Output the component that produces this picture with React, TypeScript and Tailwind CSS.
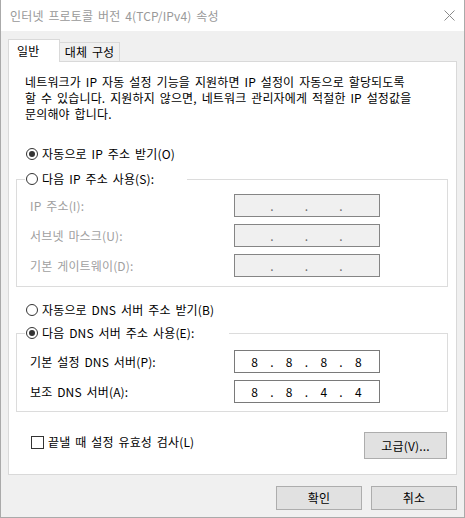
import React from 'react'

const font = {
	fontFamily: '"Noto Sans CJK KR", "Noto Sans", sans-serif',
}

function Radio({ checked }: { checked?: boolean }) {
	return (
		<span className="ml-[1px] mr-[4px] w-[12px] h-[12px] rounded-full border border-[#333333] bg-white flex items-center justify-center shrink-0">
			{checked && <span className="w-[6px] h-[6px] rounded-full bg-[#333333]" />}
		</span>
	)
}

function IpBox({ parts, disabled }: { parts?: string[]; disabled?: boolean }) {
	const cells = parts ?? ['', '', '', '']
	return (
		<div
			className={
				disabled
					? 'w-[146px] h-[23px] border border-[#858585] bg-[#f0f0f0] flex items-center'
					: 'w-[146px] h-[23px] border border-[#7a7a7a] bg-white flex items-center'
			}
		>
			<div className="ml-[11px] w-[121px] grid grid-cols-7 text-center text-[12px] leading-[16px] text-black [word-spacing:0px]">
				<span>{cells[0]}</span>
				<span className={disabled ? 'text-[#6d6d6d]' : ''}>.</span>
				<span>{cells[1]}</span>
				<span className={disabled ? 'text-[#6d6d6d]' : ''}>.</span>
				<span>{cells[2]}</span>
				<span className={disabled ? 'text-[#6d6d6d]' : ''}>.</span>
				<span>{cells[3]}</span>
			</div>
		</div>
	)
}

function FieldRow({
	label,
	disabled,
	parts,
	className,
}: {
	label: string
	disabled?: boolean
	parts?: string[]
	className?: string
}) {
	return (
		<div className={'flex items-center pl-[13px] ' + (className ?? '')}>
			<div className={'w-[204px] ' + (disabled ? 'text-[#a0a0a0]' : 'text-black')}>
				{label}
			</div>
			<IpBox disabled={disabled} parts={parts} />
		</div>
	)
}

export default function App() {
	return (
		<div
			style={font}
			className="w-[465px] h-[518px] flex flex-col border-x border-b border-[#aaaaaa] bg-[#f0f0f0] text-[12px] leading-[16px] text-black [word-spacing:2px] tracking-[0.15px]"
		>
			{/* title bar */}
			<div className="h-[31px] bg-white flex items-center justify-between pl-[9px] pr-[9px] shrink-0">
				<span className="text-[12px] text-[#999999]">
					인터넷 프로토콜 버전 4(TCP/IPv4) 속성
				</span>
				<svg width="11" height="11" viewBox="0 0 11 11">
					<path d="M0.5 0.5 L10.5 10.5 M10.5 0.5 L0.5 10.5" stroke="#8a8a8a" strokeWidth="1" />
				</svg>
			</div>

			<div className="flex-1 px-[7px] pt-[8px] flex flex-col">
				{/* tabs */}
				<div className="flex items-end h-[22px]">
					<div className="relative z-10 w-[52px] h-[23px] -mb-[1px] bg-white border-x border-t border-[#d9d9d9] pl-[8px] flex items-center">
						일반
					</div>
					<div className="w-[60px] h-[19px] border-t border-r border-[#d9d9d9] flex items-center justify-center">
						대체 구성
					</div>
				</div>

				{/* panel */}
				<div className="h-[414px] bg-white border border-[#d9d9d9] flex flex-col">
					<p className="pl-[16px] pt-[12px] whitespace-nowrap">
						네트워크가 IP 자동 설정 기능을 지원하면 IP 설정이 자동으로 할당되도록
						<br />
						할 수 있습니다. 지원하지 않으면, 네트워크 관리자에게 적절한 IP 설정값을
						<br />
						문의해야 합니다.
					</p>

					<div className="mt-[23px] ml-[16px] h-[18px] flex items-center">
						<Radio checked />
						자동으로 IP 주소 받기(O)
					</div>

					<fieldset className="mt-[7px] ml-[7px] mr-[8px] border border-[#dcdcdc] pb-[9px]">
						<legend className="ml-[8px] w-[162px] h-[18px] flex items-center bg-white">
							<Radio />
							다음 IP 주소 사용(S):
						</legend>
						<FieldRow className="mt-[6px]" label="IP 주소(I):" disabled />
						<FieldRow className="mt-[7px]" label="서브넷 마스크(U):" disabled />
						<FieldRow className="mt-[7px]" label="기본 게이트웨이(D):" disabled />
					</fieldset>

					<div className="mt-[14px] ml-[16px] h-[18px] flex items-center">
						<Radio />
						자동으로 DNS 서버 주소 받기(B)
					</div>

					<fieldset className="mt-[5px] ml-[7px] mr-[8px] border border-[#dcdcdc] pb-[8px]">
						<legend className="ml-[8px] w-[204px] h-[18px] flex items-center bg-white">
							<Radio checked />
							다음 DNS 서버 주소 사용(E):
						</legend>
						<FieldRow className="mt-[8px]" label="기본 설정 DNS 서버(P):" parts={['8', '8', '8', '8']} />
						<FieldRow className="mt-[7px]" label="보조 DNS 서버(A):" parts={['8', '8', '4', '4']} />
					</fieldset>

					<div className="mt-[20px] pl-[22px] pr-[9px] flex justify-between items-start">
						<label className="mt-[1px] h-[18px] flex items-center">
							<span className="w-[13px] h-[13px] border border-[#333333] bg-white mr-[4px]" />
							끝낼 때 설정 유효성 검사(L)
						</label>
						<button className="w-[83px] h-[27px] bg-[#e1e1e1] border border-[#adadad] text-black">
							고급(V)...
						</button>
					</div>
				</div>

				{/* dialog buttons */}
				<div className="mt-[11px] flex justify-end gap-[9px]">
					<button className="w-[86px] h-[24px] bg-[#e1e1e1] border border-[#adadad] text-black">
						확인
					</button>
					<button className="w-[86px] h-[24px] bg-[#e1e1e1] border border-[#adadad] text-black">
						취소
					</button>
				</div>
			</div>
		</div>
	)
}
